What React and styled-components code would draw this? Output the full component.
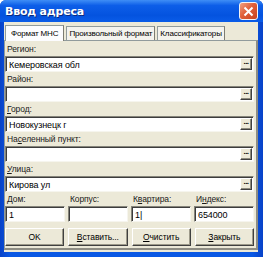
import React from 'react'
import styled, { createGlobalStyle } from 'styled-components'

const Global = createGlobalStyle`
  html, body { margin: 0; padding: 0; background: #ffffff; }
  * { box-sizing: border-box; }
`

const Window = styled.div`
  width: 263px;
  height: 257px;
  display: flex;
  flex-direction: column;
  background: linear-gradient(90deg, #0842c8 0%, #0a58e4 4%, #0a58e4 96%, #0842c8 100%);
  border-radius: 6px 6px 0 0;
  font-family: "Liberation Sans", Arial, sans-serif;
  font-size: 9px;
  color: #000;
  overflow: hidden;
`

const TitleBar = styled.div`
  height: 22px;
  flex: none;
  display: flex;
  align-items: center;
  justify-content: space-between;
  padding: 0 5px 0 5px;
  background: linear-gradient(180deg, #3f8ef6 0%, #0d5ee8 25%, #0453df 70%, #0a5ce8 100%);
`

const Title = styled.span`
  color: #fff;
  font-weight: bold;
  font-size: 11px;
  font-family: "DejaVu Sans", Verdana, sans-serif;
  letter-spacing: -0.2px;
  text-shadow: 1px 1px 0 #0a2a80;
`

const CloseButton = styled.div`
  width: 19px;
  height: 18px;
  border: 1px solid #f4f4f4;
  border-radius: 3px;
  background: linear-gradient(135deg, #f0a080 0%, #e0603a 45%, #c8431f 100%);
  display: flex;
  align-items: center;
  justify-content: center;
`

const Body = styled.div`
  flex: 1;
  margin: 0 5px 5px 4px;
  background: #ece9d8;
  padding: 3px 0 2px 0;
  display: flex;
  flex-direction: column;
`

const TabRow = styled.div`
  display: flex;
  align-items: flex-end;
  height: 15px;
  flex: none;
  padding-left: 1px;
`

const Tab = styled.div`
  height: ${p => (p.$active ? '16px' : '14px')};
  padding: 0 ${p => (p.$active ? '5px' : '2px')};
  margin-right: 2px;
  display: flex;
  align-items: center;
  border: 1px solid #919b9c;
  border-bottom: none;
  border-right: 1px solid #7d7c72;
  background: ${p => (p.$active ? '#fcfcfe' : '#f4f3ee')};
  white-space: nowrap;
  font-size: 8px;
  letter-spacing: -0.15px;
  position: relative;
  z-index: ${p => (p.$active ? 1 : 0)};
  margin-bottom: ${p => (p.$active ? '-1px' : '0')};
`

const Panel = styled.div`
  flex: 1;
  border: 1px solid #919b9c;
  border-right: 2px solid #8e8d84;
  border-bottom: 2px solid #8e8d84;
  background: #ece9d8;
  padding: 2px 2px 0 0;
  display: flex;
  flex-direction: column;
`

const Field = styled.div`
  display: flex;
  flex-direction: column;
  margin-bottom: ${p => (p.$last ? '0' : '1px')};
`

const Label = styled.div`
  height: 13px;
  line-height: 13px;
  padding-left: 2px;
  font-size: 8.5px;
  color: #1a1a1a;
  letter-spacing: -0.1px;
  u { text-decoration: underline; }
`

const InputBox = styled.div`
  height: 16px;
  background: #fff;
  border-top: 1px solid #85847a;
  border-left: 1px solid #85847a;
  border-right: 1px solid #f6f5ee;
  border-bottom: 1px solid #f6f5ee;
  box-shadow: inset 1px 1px 0 #3c3c3c;
  display: flex;
  align-items: center;
  justify-content: space-between;
  padding: 1px 0 0 3px;
  font-size: 9px;
  letter-spacing: -0.1px;
`

const DotsButton = styled.div`
  width: 12px;
  height: 12px;
  align-self: flex-end;
  margin: 0 1px 1px 0;
  background: #ece9d8;
  border-top: 1px solid #fff;
  border-left: 1px solid #fff;
  border-right: 1px solid #404040;
  border-bottom: 1px solid #404040;
  box-shadow: inset -1px -1px 0 #8c8a7c;
  font-size: 8px;
  line-height: 6px;
  text-align: center;
  font-weight: bold;
  letter-spacing: -0.5px;
`

const Grid = styled.div`
  display: grid;
  grid-template-columns: repeat(4, 1fr);
  column-gap: 3px;
  margin-bottom: 6px;
`

const ButtonRow = styled.div`
  display: grid;
  grid-template-columns: repeat(4, 1fr);
  column-gap: 4px;
`

const Button = styled.div`
  height: 18px;
  display: flex;
  align-items: center;
  justify-content: center;
  background: #ece9d8;
  border-top: 1px solid #fff;
  border-left: 1px solid #fff;
  border-right: 1px solid #404040;
  border-bottom: 1px solid #404040;
  box-shadow: inset -1px -1px 0 #9d9a8a;
  font-size: 8.5px;
  letter-spacing: -0.1px;
`

const fields = [
  { label: 'Регион:', value: 'Кемеровская обл' },
  { label: 'Район:', value: '' },
  { label: <><u>Г</u>ород:</>, value: 'Новокузнецк г' },
  { label: <>На<u>с</u>еленный пункт:</>, value: '' },
  { label: <><u>У</u>лица:</>, value: 'Кирова ул' },
]

const small = [
  { label: <><u>Д</u>ом:</>, value: '1' },
  { label: 'Корпус:', value: '' },
  { label: <>К<u>в</u>артира:</>, value: '1|' },
  { label: <>И<u>н</u>декс:</>, value: '654000' },
]

export default function App() {
  return (
    <>
      <Global />
      <Window>
        <TitleBar>
          <Title>Ввод адреса</Title>
          <CloseButton>
            <svg width="11" height="11" viewBox="0 0 11 11">
              <path d="M1.5 1.5 L9.5 9.5 M9.5 1.5 L1.5 9.5" stroke="#fff" strokeWidth="2" />
            </svg>
          </CloseButton>
        </TitleBar>
        <Body>
          <TabRow>
            <Tab $active>Формат МНС</Tab>
            <Tab>Произвольный формат</Tab>
            <Tab>Классификаторы</Tab>
          </TabRow>
          <Panel>
            {fields.map((f, i) => (
              <Field key={i}>
                <Label>{f.label}</Label>
                <InputBox>
                  <span>{f.value}</span>
                  <DotsButton>...</DotsButton>
                </InputBox>
              </Field>
            ))}
            <Grid>
              {small.map((f, i) => (
                <Field key={i} $last>
                  <Label>{f.label}</Label>
                  <InputBox>
                    <span>{f.value}</span>
                  </InputBox>
                </Field>
              ))}
            </Grid>
            <ButtonRow>
              <Button>OK</Button>
              <Button><u>В</u>ставить...</Button>
              <Button><u>О</u>чистить</Button>
              <Button><u>З</u>акрыть</Button>
            </ButtonRow>
          </Panel>
        </Body>
      </Window>
    </>
  )
}
